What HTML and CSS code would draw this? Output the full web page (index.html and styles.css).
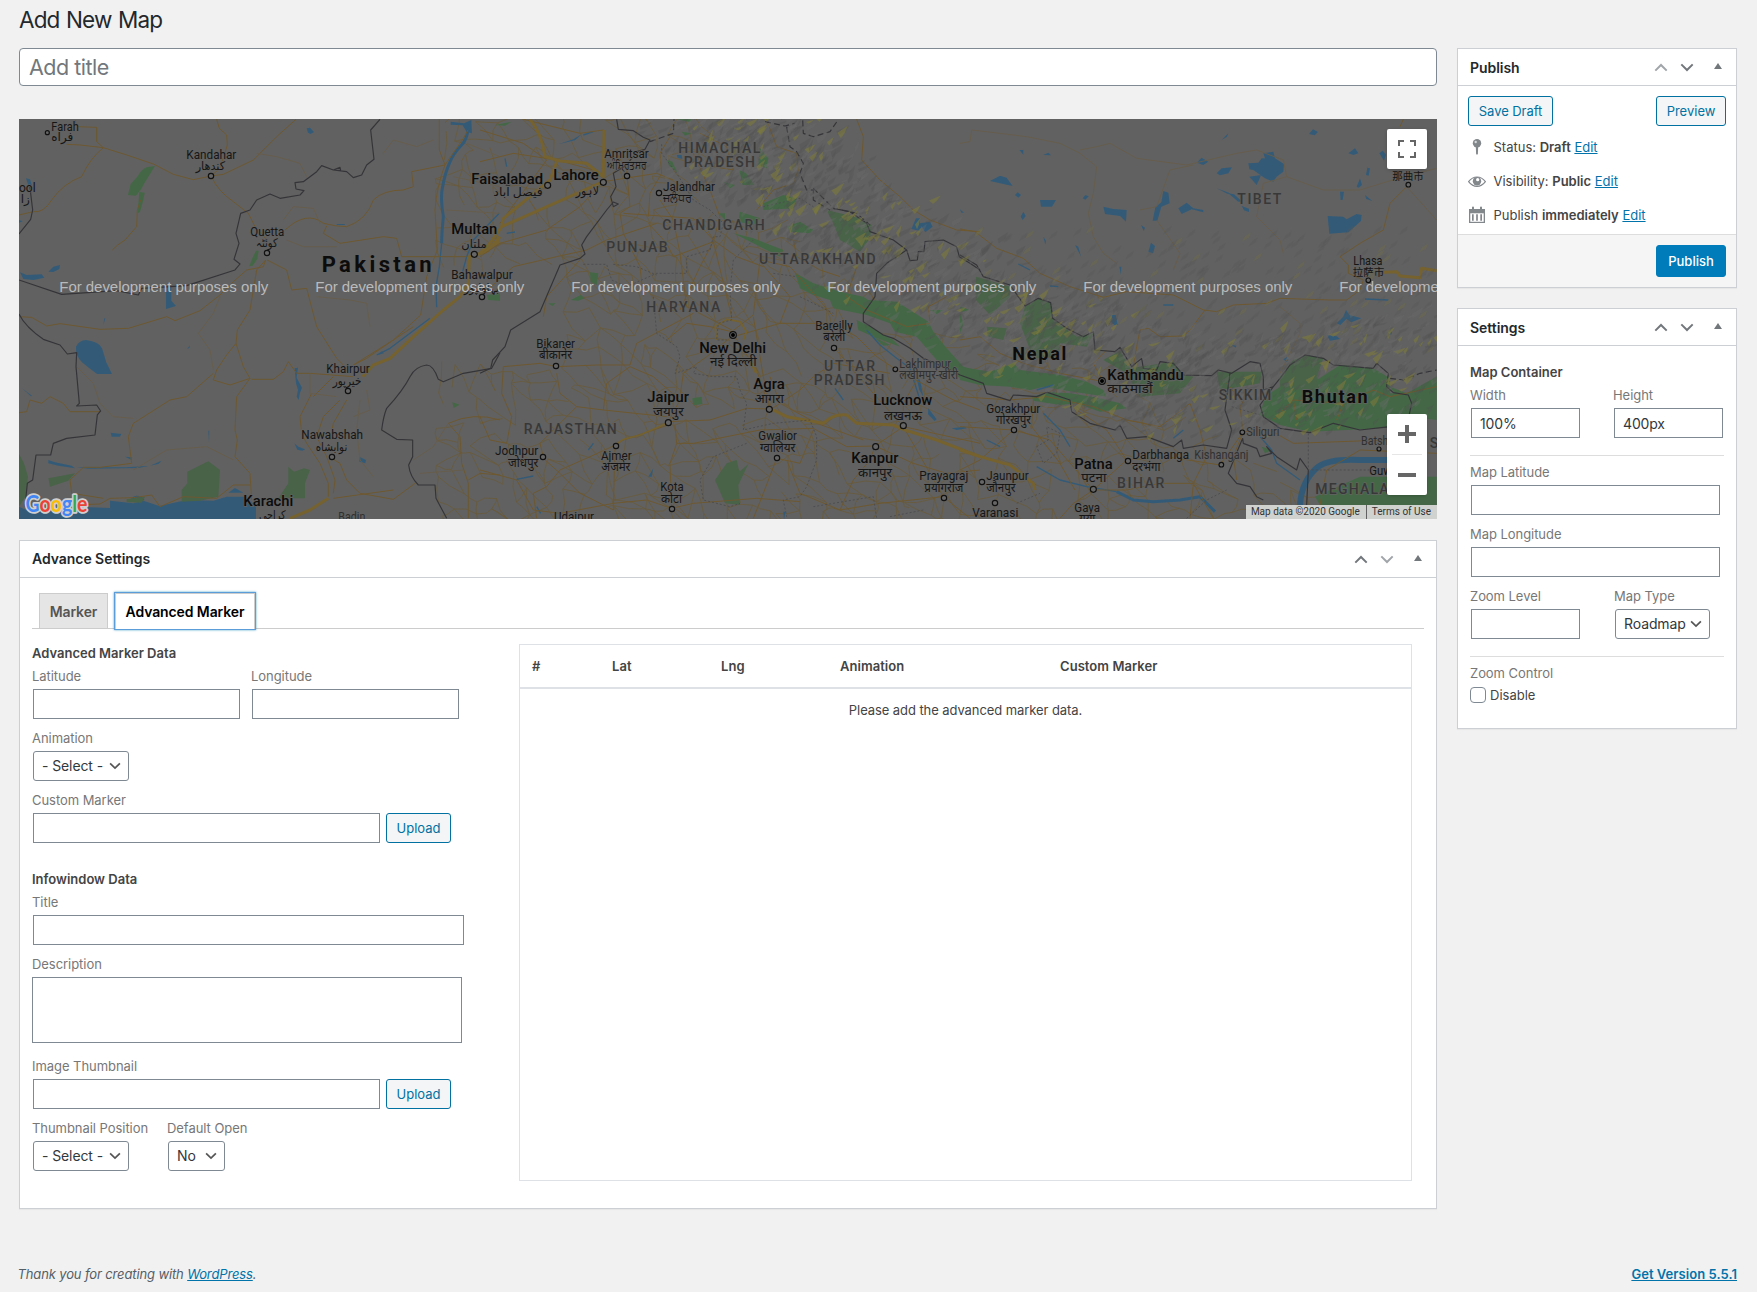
FILE: index.html
```html
<!DOCTYPE html>
<html lang="en">
<head>
<meta charset="utf-8">
<title>Add New Map</title>
<link rel="stylesheet" href="styles.css">
</head>
<body>
<svg class="defs" width="0" height="0">
  <symbol id="up" viewBox="0 0 14 9"><path d="M1.300 7.600 7 2l5.700 5.600" fill="none" stroke="currentColor" stroke-width="2"/></symbol>
  <symbol id="down" viewBox="0 0 14 9"><path d="M1.300 1.400 7 7l5.700-5.600" fill="none" stroke="currentColor" stroke-width="2"/></symbol>
  <symbol id="tri" viewBox="0 0 8 6"><path d="M4 0l4 6H0z" fill="currentColor"/></symbol>
</svg>
<h1 class="page-title">Add New Map</h1>
<div class="columns">
  <main class="main">
    <input class="title-input" type="text" placeholder="Add title">
    <div class="map">
      <svg class="map-canvas" width="1418" height="400" viewBox="0 0 1418 400">
        <g id="minor" class="minor"></g>
        <g transform="translate(-19 -9) scale(.33333)">
          <g class="water">
            <path d="M57 1190 90 1205 130 1190 230 1190 330 1194 330 1172 400 1180 430 1172 478 1188 560 1170 640 1172 680 1160 740 1160 768 1190 768 1230 57 1230z"/>
            <path d="M228 710q10-20 30-20 40 5 48 25 8 25 12 40l18 37h-45q-25-18-45-35-20-20-18-47z"/>
            <path d="M60 487 80 495 125 493 133 503 100 510 70 507zM145 485 160 470 180 465 178 477 160 486zM498 530 514 530 514 572 528 588 498 597zM78 205 90 208 98 235 90 240zM920 55l10-2 12 13-10 6-8-4zM57 330 68 334 57 338zM332 968 364 972 360 980 335 980zM145 1050l20 7 50 10 10 8-50-8-30-7zM230 1072l150 0 70-5 35-15-10 10-60 12-150 2zM375 1040l20 2 0 8zM883 1000l12 10 20 8-8 4-15-3zM1078 1040l20 10-2 10-18-5zM884 775l10-2-4 30 16 30-6 15-4 22-6-10 4-20-6-20zM660 1148l25 0 20-14 25 14-40 0zM390 1170q20-25 44 0l-20 4zM310 645l3-20 3 0zM1010 342l24 0 0 3-24 0zM66 835l30 22-3 2zM562 716l8-10-2 8zM1132 735l20-5-6-6zM625 962l3 0-1 35z"/>
            <path d="M1352 35l40 5 22-10 2 40-16-4-12-20-36-2z"/>
          </g>
          <path class="river" d="M1404 60Q1400 90 1385 105 1360 130 1348 160 1335 190 1328 230 1320 260 1330 320 1325 370 1325 400"/>
          <path class="brook" d="M1325 400 1318 470 1308 530 1310 592M1130 735 1170 715 1210 685 1250 655 1290 625"/>
          <path class="brook" d="M1498 310 1420 390 1400 440 1384 500"/>
          <path class="green" d="M465 168 440 172Q425 178 412 200L392 222 384 255 408 257 425 235 434 218zM418 246 434 248 430 270 420 305 413 310zM768 422l8 0-4 25-14 20-10 2 8-22zM1357 877l22 7-18 10zM1460 555l40-5 0 22-35-2z"/>
          <path class="park" d="M57 1032 72 1060 84 1100 76 1160 57 1190zM145 1105 225 1090 205 1112 150 1130zM562 1085 625 1054 660 1080 655 1160 600 1172 545 1175 545 1140 562 1120zM865 1070 882 1085 912 1075 930 1080 915 1120 915 1165 835 1165 865 1120zM380 1168l55-8-10 18-45-2z"/>
          <path class="road" d="M225 30 230 50 290 52 290 95 310 113 240 105 200 103M310 113 380 135 460 162 520 193 580 209 633 198 670 193 760 150 830 80 888 28M650 28 658 55 680 75 682 105 660 175 633 198M310 113Q270 145 245 200 190 220 155 270 130 310 100 305L57 315M633 198Q655 245 700 275L745 310 765 350 801 390M337 420Q350 405 375 390L410 350 412 300 422 270M57 620 95 622 140 648 180 641 300 658 385 655 500 620 525 632 600 602 660 555 700 515 740 480 790 470 797 450M57 908 80 905 90 870 125 880 150 860 190 880 210 905 300 905M85 1190 300 1182 330 1165 400 1163 455 1155 480 1190 550 1160 650 1165 700 1125 750 1125M797 450 770 480 750 600 712 660 708 700 680 735 650 780 640 810 690 825 750 805 730 770 708 700M640 790 560 860 510 870 400 940 385 980 395 1060 300 1072 250 1072 210 1110 215 1150 310 1165M750 805 710 860 705 960 712 990 705 1040 750 1090 755 1170M801 450 860 480 875 540 920 535 950 650 1010 745 1030 765M855 360Q920 300 970 340 1010 350 1040 350 1100 330 1120 270 1150 240 1210 240L1240 230 1235 185 1335 165 1318 120 1318 28M970 370 1020 400 1150 380 1190 385 1205 440 1400 440M980 348 970 370M1335 165Q1310 230 1305 300L1312 420 1280 500 1262 615 1180 690 1100 745 1060 765M755 808 820 808 850 785 865 755 890 790 930 790 1060 800M935 850 900 920 905 970 920 1000 960 1060 985 1120 985 1160M1020 870 970 920 950 980 980 1040 1005 1110 1000 1150M1040 870 1000 940 990 990M995 1045 1020 1060 1040 1110 1080 1150 1180 1168 1245 1120M1000 1165 1180 1140M1345 940Q1420 905 1500 930M1345 940 1380 980 1385 1060 1405 1120 1405 1225M1405 1110 1440 1090 1500 1095M970 830 940 860 1000 800M1335 165 1390 85 1404 60M1060 765 1180 690 1240 650"/>
          <path class="faint" d="M660 560 640 610 595 670 630 720 640 780M950 560 1050 570 1100 580 1110 650M850 330 880 290 940 295 960 340M860 390 910 410 1010 410M770 130 830 140 900 160 920 200M230 770 280 820 300 880 340 920 400 925M400 1080 500 1020 620 1010 700 1050M1080 870 1070 960 1080 1050 1120 1100M1150 130 1180 90 1250 110 1300 90M1400 100 1500 140M1360 200 1500 230M1340 300 1500 310M1440 400 1450 500M1100 840 1110 900 1060 920M1240 1050 1300 1010 1345 940M1260 1090 1390 1080M930 790 930 850 1010 860"/>
          <path class="highway" d="M1088 800 1120 765 1170 745 1240 680 1330 600 1380 560 1405 520 1408 440 1460 425 1500 380M1430 435 1500 395M870 1225 930 1200 985 1165"/>
          <path class="border" d="M57 510 185 553 350 542 415 555 425 535 560 527 705 480 720 462 702 448 717 400 708 370 722 310 750 300 770 270 810 252 840 265 900 255 912 242 888 237 885 218 910 215 950 185 965 167 1000 180 1022 182 1020 172 1000 180 1040 185 1060 203 1085 195 1100 165 1122 148 1112 60 1140 28M57 372 92 328 98 300 92 250 90 228M57 612Q75 650 130 688L180 705 202 732 230 728 228 770 238 880 230 888 290 885 302 903 292 915 285 975 200 985 160 1000 152 1035 108 1035 98 1110 82 1120 75 1190M1500 728 1475 775 1390 790 1330 815 1315 808Q1300 765 1280 765 1245 770 1230 800 1210 840 1160 895 1150 920 1145 960L1190 988 1238 990 1238 1040 1226 1065Q1230 1100 1255 1125L1305 1125 1308 1165 1340 1225"/>
        </g>
        <g transform="translate(461 -9) scale(.33333)">
          <path class="green" d="M45 45l50-10-20 12zM605 65l30 5-20 7zM590 28l45 0-5 8zM562 150l15 5 15 32-25-20zM840 115l25 30-5 30-25-10zM730 215l35 10-15 10zM778 180l20 10 25 35-35 0zM850 280 910 255 950 265 940 295 850 300zM780 305 840 325 820 345 775 335zM715 310l20 0 0 20zM760 370 820 385 910 420 900 440 820 400zM920 350 960 335 1000 360 990 370 930 365zM330 487l25 3-5 35-18-10zM272 570l30-15 12 10-20 7zM945 488 1000 520 1080 545 1150 560 1165 570 1250 575 1290 600 1345 635 1360 665 1400 715 1450 770 1500 785 1500 820 1440 805 1370 750 1310 680 1245 665 1230 640 1160 615 1060 595 1050 570 1000 555 960 535zM637 865l28-5 2 22-27 4zM205 580l22 0-10 8zM1130 630l30 15 80 45 20 20-80-30-45-20zM1180 680l50 25-20 2zM1350 600l40 0-20 12zM1440 590l30 10-25 5z"/>
          <path class="park" d="M1040 300 1140 325 1175 345 1170 385 1140 425 1080 390 1060 340zM740 1060 770 1050 778 1085 805 1062 775 1125 780 1185 735 1180 705 1110z"/>
          <path class="water" d="M1308 325l12 0 0 15 30-5 8 15-22 17-12-18-4 14-26-6zM590 135l15 0 2 12-14-4zM1440 298l12 10-8 0zM1310 805l10 5 10 50-12-20zM1345 895l25 33-6 5-20-20zM1415 955l40-5 5 5-30 5zM235 103l45-15 25-15-20 18zM505 1100l15-25-5 25zM910 1205l6 0-4 25z"/>
          <path class="brook" d="M1160 660 1200 705 1250 745 1290 775 1320 870M1065 835 1090 870M75 145l5 25M80 370l25-4M310 75l30-10M340 1000 325 1020M110 1108 160 1098M170 1190l12 20"/>
          <path class="road" d="M0 440 60 400 200 360 300 290 370 215 530 190 580 210M410 130 440 180 450 290 420 310 430 370 480 470 490 560M570 80 540 130 545 190 510 250 505 320M430 310 640 325 700 390 770 440 850 470M640 130 690 240 720 320 700 395 580 440 560 400 505 340M700 395 740 560 755 620M700 395 660 470 600 600M755 665 690 650 620 640 560 690M755 665 820 615 830 530 840 450 930 470 1000 550 1060 620M755 665 830 780 870 900M760 680 900 640 960 640 1060 640 1130 680 1190 740 1250 780 1420 870 1500 900M540 270 580 330 600 430 620 590 755 660M0 560 100 470 230 440 320 420 380 390 530 340M190 620 200 560 300 450M230 770 350 765 450 765 470 700 640 610M230 770 180 760 70 770 65 850 95 920 80 1000 30 990 0 920M230 790 240 850 290 890 370 900 560 920M290 890 180 1000 190 1040M370 900 380 820 450 770 520 800 600 870 565 935M565 935 690 930 800 895 870 897M565 945 430 990 400 1008 330 1040 240 1080 200 1130 160 1150M600 860 610 790 680 740 755 680M585 945 590 1000 570 1060 575 1195M590 1000 640 1000 840 960 1000 955 1100 1010 1185 1008 1270 950 1500 1000M890 1045 850 1150 820 1225M890 1045 960 1060 1000 960M1185 1010 1170 1050 1120 1110 1080 1200 960 1150 920 1050M870 900 960 840 1000 800 1060 760 1230 790M870 800 900 880 1010 940 1150 990M1270 950 1270 880 1310 810M1270 950 1390 1160 1470 1225M1190 1010 1300 1060 1400 1090 1500 1080M1390 1160 1200 1180 1080 1200M1270 950 1180 850 1060 710M0 60 130 100 200 150 60 340M0 155 100 130 230 150 340 180M130 28 300 70 370 60M860 30 890 110 950 130 955 180 940 220 880 240 830 300M1130 28 1150 80 1145 150 1200 210 1260 260 1300 300 1350 330 1430 360 1500 365M660 70 740 110 760 180 700 170M940 390 950 440 1020 480 1080 500M1130 470 1100 560 1160 600 1280 650 1350 640 1345 590 1400 560M0 1080 110 1110 160 1200 240 1210 400 1180 500 1170 575 1195 640 1180 830 1165 960 1175M190 1045 240 1090 300 1150 400 1200 405 1010M160 1150 170 1225M900 640 930 560 840 455M820 620 850 800 870 895"/>
          <path class="highway" d="M150 28Q185 70 195 140L240 153 320 160 370 200 372 60M230 155 210 210 70 325 65 350 370 215M65 350 30 400 0 430M870 895 920 920 1030 940Q1060 910 1100 915L1130 940 1240 945 1275 960 1370 990 1500 1040M830 790 815 760"/>
          <path class="thin-highway" d="M565 938 480 975 430 988 400 1008M710 690 705 650 740 628 780 635 800 665 790 690"/>
          <path class="border" d="M410 28 415 58 460 62 490 82 510 90 495 118 470 125 440 165 400 190 408 230 392 260 400 290 415 282 400 276 380 300 320 380 305 405 315 432 300 445 240 465 180 605 92 660 75 710 38 750 32 775 0 790"/>
          <path class="border dash" d="M855 35 915 48 945 40M1070 36 1050 65 1000 80 970 70 968 28M920 50 930 110 950 125 970 160 960 190 980 240 1000 240 1000 270 1050 300M510 95 580 70 582 28M1000 235 1060 295 1130 310 1170 345"/>
          <path class="border" d="M1060 295 1110 305 1160 340 1170 365 1240 390 1280 420 1290 452 1312 450 1315 425 1332 425 1335 395 1390 390 1430 410 1438 440 1470 460 1500 480M1280 420 1220 460 1190 490 1185 560 1150 610 1150 635 1210 675 1240 685 1290 715 1330 745 1400 775 1440 795 1480 815 1500 815"/>
          <path class="state" d="M310 463 380 463 395 510 440 530 530 490 620 490 620 440 690 420 700 380 720 380 730 340 690 300 640 270 590 190 545 130 545 100M820 390 760 450 750 540 755 630 715 640 710 690 740 690M400 463 470 470 530 495M520 560 530 670 590 710 600 740 585 790 650 770 640 790 700 800 770 800 780 840 800 880 790 960 880 940 990 930 1010 980 1010 1050 980 1130 960 1160 910 1170 920 1220M800 1000 700 1040 660 1110 670 1170 750 1190 780 1180M960 560 1060 610M850 290 960 265 1000 290M880 490 950 500M1000 1190 1180 1160 1190 1225M1230 1220 1330 1200"/>
        </g>
        <g transform="translate(941 -9) scale(.33333)">
          <path class="park" d="M48 500 150 530 150 560 90 615 48 570zM195 590 240 563 272 578 280 630 350 680 400 670 380 710 300 700 295 740 220 745 180 640zM80 650l60 5-10 35-45-10zM430 750 480 722 510 775 640 755 670 795 700 800 660 850 540 860 500 790zM770 785 815 785 905 785 900 820 780 840zM960 850 960 800 1000 750 1040 735 1090 745 1070 800 1090 850z"/>
          <path class="green" d="M0 770 90 785 160 760 180 780 300 795 380 815 430 840 440 860 340 845 250 830 210 840 150 830 60 825 0 810zM215 860 265 847 330 850 420 865 480 880 500 895 420 905 350 880 300 885 220 872zM915 860 960 830 1080 850 1070 810 1140 765 1240 775 1290 805 1290 850 1340 850 1345 950 1160 960 1050 965 960 945 900 915zM1290 830 1340 850 1430 800 1430 930 1350 920zM1065 1160 1200 1100 1430 1100 1430 1185 1080 1185zM905 1010l30 10-20 10zM0 610 10 640 0 670z"/>
          <path class="water" d="M90 213 120 197 140 203 158 228 120 220zM240 270l48 0-12 20-33 0zM182 320 190 305 197 318 188 330zM430 290 460 297 500 300 498 335 480 318 435 312zM610 243l15 5 4 32-25 10-12 42-14 0 8-40 18-15zM655 295 680 278 700 295 730 300 730 307 695 298 665 312zM710 158 725 143 745 155 730 165zM770 190 785 175 816 172 805 190 780 196zM865 160 895 158 905 145 915 145 910 130 940 125 945 145 972 162 970 185 950 200 940 215 915 205 880 180 868 178zM868 200l35-5-5 12-8 18zM845 288l22 8 0 10-15-5zM1103 318 1150 320 1160 328 1190 312 1205 315 1203 333 1165 367 1108 371zM1140 245l12 0-4 25-6 0zM1190 230l10-25 6 20-10 8zM1165 130 1185 115 1195 130 1180 135zM1218 195l4-22 8 2-4 22zM1258 130l10-8 10 12-6 18zM1047 72l12-14 15 8-10 10zM565 425l8-27 12 10-6 22zM345 405l10 5 8 30zM165 255l8-8 10 8-8 8zM368 265l8-10 10 4-10 10zM178 120l12 0 0 14zM250 135l15-7 8 8zM452 615l15 0 6 30-10 0-10-10 5-8zM1130 640l20-20 8-20 10 15 36 10-30 12-15-10-18 18zM1100 675l30 4 10 8-30 5zM970 748l10-6 6 6-6 8zM815 705l14 2-2 6zM785 90l20-20-4 10zM1290 655l6 15-4 5zM478 470l6 0-1 25zM1215 255l22 18-18-6zM770 235l40 15-5 3zM805 250l30 25 12 0-25-22zM250 380l8 12-2 12zM543 345l12 8-4 10z"/>
          <path class="bigriver" d="M1020 1185Q1025 1110 1075 1070 1110 1045 1200 1050L1290 1050"/>
          <path class="river" d="M470 1145 520 1170 580 1175 660 1170 720 1160 765 1205"/>
          <path class="brook" d="M230 1070 300 1110 380 1130 470 1145M900 980 935 1020 950 1060 1020 1110M250 910 300 960 330 1010M640 985 670 960M80 990 120 1010M230 840 280 825M1215 567 1285 570M175 462 210 480M270 528 295 530M610 585h30"/>
          <path class="road" d="M0 357 45 365 110 415 190 445 240 490 330 530 430 562 500 545 640 555 730 600 770 605 820 585 920 580 960 565 1110 570 1160 570 1200 540 1210 510M1140 440 1200 400 1270 360 1290 280 1340 230M1140 440 1165 465 1165 490 1210 510M415 565 410 545M735 600 690 660 670 678 600 680 565 655 540 660 530 710 520 770M0 690 60 680 120 730 190 760 300 790 430 815M430 815 400 760 440 720M0 860 150 870 260 860 400 890 500 930 600 950 690 880M0 950 160 960 270 990 400 1140M220 870 215 950 300 1060 345 1140M160 960 60 1050 0 1080M500 1050 400 1140 340 1180 300 1225M500 1050 440 960 350 900M500 1050 620 1040 780 1065 850 965 840 890 870 840M690 880 720 960 740 1040 700 1120 690 1225M850 965 930 960 1000 1000 1280 990M850 965 820 1040 830 1110M400 1140 500 1140 600 1120 700 1120 760 1225M940 930 1000 870 1150 880 1240 840 1290 860 1430 830M1000 870 1010 930M1150 880 1130 930M1330 28 1320 50M800 820 850 880M1080 1185 1100 1080 1200 1020 1430 1030"/>
          <path class="faint" d="M0 100 30 95 35 60 120 70 200 80 300 100 360 130 410 170 400 250 385 310 400 380 430 430 470 460M360 120 410 110 450 100 530 145 680 165 830 130 890 120 970 150 980 200 1090 240 1200 240 1330 200 1430 175M540 300 590 290 630 180 700 165M590 330 660 430 640 480M980 200 910 220 890 320 960 390 970 430M1430 330 1340 230M960 590 1020 640 1020 670 960 790"/>
          <path class="highway" d="M1270 487 1310 485 1320 498 1380 503 1385 475 1430 482M0 1020 60 1040 150 1065 220 1120 225 1140"/>
          <path class="border" d="M0 435 50 465 70 500 150 525 195 588 235 565 272 578 278 625 320 655 370 680 400 665 405 720 465 725 480 712 515 770 545 745 550 775 590 780 600 755 640 760 670 795 755 797 775 780 815 790 870 755 900 760 910 800 910 840 940 830 960 805 990 765 1035 735 1090 745 1120 765 1240 775 1250 760 1285 790 1280 830 1300 848 1345 855 1355 880 1340 950M0 795 70 820 80 850 150 872 160 855 230 860 262 847 330 870 335 905 390 940 465 960 480 945 500 985 560 980 640 1010 665 990 670 1015 730 1005 800 1015 815 960 795 900 810 790M940 830 900 885 910 920 960 955 1050 968 1120 940 1200 960 1290 950M848 985 850 1000 890 1015 900 1040 935 1030 920 1010 950 1040 1010 1080 1020 1045 1045 1080 1040 1185M848 985 825 1040 805 1090 830 1120 870 1130 890 1160 910 1170"/>
          <path class="border dash" d="M1290 805 1330 810 1380 790 1430 780"/>
          <path class="state" d="M230 1010 265 990 260 950 300 970 290 1030 250 1060 230 1010M680 1225 740 1170 800 1140M815 890 900 915M1045 970 1045 1080 1240 1080M170 1180 240 1150"/>
        </g>
        <g id="hills"></g>
        <g transform="translate(-19 -9) scale(.33333)">
          <g class="t s"><text x="154" y="62" textLength="82">Farah</text><text x="154" y="94">فراه</text><text x="559" y="147" textLength="150">Kandahar</text><text x="587" y="180" textLength="88">كندهار</text><text x="57" y="246">ool</text><text x="62" y="280">زا</text><text x="751" y="378" textLength="102">Quetta</text><text x="769" y="411" textLength="64">کوئٹہ</text><text x="1354" y="507" textLength="184">Bahawalpur</text><text x="1392" y="545" textLength="105">بہاولپور</text><text x="979" y="790" textLength="130">Khairpur</text><text x="998" y="826" textLength="86">خیرپور</text><text x="904" y="987" textLength="185">Nawabshah</text><text x="947" y="1022" textLength="95">نوابشاه</text><text x="1015" y="1232" textLength="81" class="dim">Badin</text></g>
          <g class="t b"><text x="1354" y="372" textLength="138">Multan</text><text x="730" y="1188" textLength="150">Karachi</text><text x="1414" y="222" textLength="215">Faisalabad</text></g>
          <g class="t s"><text x="1384" y="413" textLength="76">ملتان</text><text x="777" y="1227" textLength="80">کراچی</text><text x="1480" y="258" textLength="148">فیصل آباد</text></g>
          <text class="t c" x="965" y="487" textLength="330">Pakistan</text>
          <g class="dot"><circle cx="142" cy="68" r="6"/><circle cx="633" cy="198" r="8"/><circle cx="801" cy="429" r="8"/><circle cx="1423" cy="433" r="9"/><circle cx="1446" cy="561" r="8"/><circle cx="1044" cy="843" r="8"/><circle cx="996" cy="1041" r="8"/></g>
        </g>
        <g transform="translate(461 -9) scale(.33333)">
          <g class="t st"><text x="595" y="129" textLength="246">HIMACHAL</text><text x="611" y="171" textLength="214">PRADESH</text><text x="547" y="360" textLength="307">CHANDIGARH</text><text x="379" y="426" textLength="184">PUNJAB</text><text x="837" y="461" textLength="350">UTTARAKHAND</text><text x="499" y="606" textLength="222">HARYANA</text><text x="1032" y="783" textLength="153">UTTAR</text><text x="1001" y="825" textLength="212">PRADESH</text><text x="131" y="972" textLength="279">RAJASTHAN</text></g>
          <g class="t b"><text x="220" y="210" textLength="136">Lahore</text><text x="658" y="729" textLength="200">New Delhi</text><text x="820" y="838" textLength="94">Agra</text><text x="502" y="877" textLength="125">Jaipur</text><text x="1180" y="885" textLength="177">Lucknow</text><text x="1114" y="1060" textLength="141">Kanpur</text></g>
          <g class="t s"><text x="287" y="255" textLength="70">لاہور</text><text x="373" y="144" textLength="133">Amritsar</text><text x="382" y="178" textLength="117">ਅੰਮ੍ਰਿਤਸਰ</text><text x="549" y="243" textLength="156">Jalandhar</text><text x="549" y="275" textLength="87">ਜਲੰਧਰ</text><text x="169" y="714" textLength="116">Bikaner</text><text x="177" y="748" textLength="99">बीकानेर</text><text x="690" y="768" textLength="140">नई दिल्ली</text><text x="1006" y="660" textLength="112">Bareilly</text><text x="1030" y="692" textLength="66">बरेली</text><text x="824" y="879" textLength="88">आगरा</text><text x="519" y="918" textLength="92">जयपुर</text><text x="1212" y="930" textLength="114">लखनऊ</text><text x="1134" y="1100" textLength="102">कानपुर</text><text x="45" y="1036" textLength="130">Jodhpur</text><text x="84" y="1071" textLength="91">जोधपुर</text><text x="363" y="1050" textLength="92">Ajmer</text><text x="364" y="1084" textLength="87">अजमेर</text><text x="835" y="990" textLength="116">Gwalior</text><text x="840" y="1025" textLength="106">ग्वालियर</text><text x="541" y="1143" textLength="70">Kota</text><text x="543" y="1178" textLength="63">कोटा</text><text x="1318" y="1110" textLength="147">Prayagraj</text><text x="1333" y="1145" textLength="117">प्रयागराज</text><text x="222" y="1232" textLength="120">Udaipur</text><text class="dim" x="1258" y="774" textLength="155">Lakhimpur</text><text class="dim" x="1258" y="806" textLength="176">लखीमपुर-खीरी</text></g>
          <g class="dot"><circle cx="203" cy="226" r="9"/><circle cx="370" cy="217" r="9"/><circle cx="441" cy="198" r="8"/><circle cx="537" cy="249" r="8"/><circle cx="228" cy="768" r="8"/><circle cx="759" cy="675" r="10"/><circle cx="1062" cy="714" r="8"/><circle cx="1246" cy="778" r="7"/><circle cx="868" cy="898" r="9"/><circle cx="565" cy="938" r="9"/><circle cx="1270" cy="947" r="9"/><circle cx="1187" cy="1010" r="9"/><circle cx="189" cy="1041" r="8"/><circle cx="408" cy="1008" r="8"/><circle cx="891" cy="1044" r="8"/><circle cx="576" cy="1197" r="8"/><circle cx="1392" cy="1164" r="8"/></g>
          <circle cx="759" cy="675" r="6"/>
        </g>
        <g transform="translate(941 -9) scale(.33333)">
          <g class="t st"><text x="832" y="282" textLength="132">TIBET</text><text x="776" y="870" textLength="158">SIKKIM</text><text x="471" y="1134" textLength="142">BIHAR</text><text x="1066" y="1152" textLength="276">MEGHALAYA</text><text x="1409" y="1014">S</text></g>
          <g class="t c"><text x="157" y="751" textLength="162">Nepal</text><text x="1025" y="880" textLength="198">Bhutan</text></g>
          <g class="t b"><text x="442" y="810" textLength="229">Kathmandu</text><text x="343" y="1076" textLength="115">Patna</text></g>
          <g class="t s"><text x="442" y="850" textLength="136">काठमाडौं</text><text x="79" y="909" textLength="162">Gorakhpur</text><text x="108" y="943" textLength="105">गोरखपुर</text><text x="517" y="1047" textLength="170">Darbhanga</text><text x="517" y="1082" textLength="84">दरभंगा</text><text x="364" y="1116" textLength="75">पटना</text><text class="dim" x="703" y="1047" textLength="162">Kishanganj</text><text x="859" y="978" textLength="99" class="dim">Siliguri</text><text x="79" y="1110" textLength="127">Jaunpur</text><text x="79" y="1145" textLength="87">जौनपुर</text><text x="37" y="1221" textLength="138">Varanasi</text><text x="343" y="1206" textLength="77">Gaya</text><text x="358" y="1240" textLength="48">गया</text><text x="1180" y="465" textLength="87">Lhasa</text><text class="han" x="1178" y="498">拉萨市</text><text class="han" x="1297" y="210">那曲市</text><text class="dim" x="1203" y="1004" textLength="108">Batshal</text><text x="1228" y="1095" textLength="143">Guwahati</text></g>
          <g class="dot"><circle cx="426" cy="813" r="10"/><circle cx="162" cy="960" r="8"/><circle cx="504" cy="1053" r="8"/><circle cx="400" cy="1138" r="9"/><circle cx="784" cy="1064" r="7"/><circle cx="847" cy="967" r="7"/><circle cx="66" cy="1116" r="8"/><circle cx="105" cy="1179" r="8"/><circle cx="1225" cy="511" r="7"/><circle cx="1345" cy="224" r="7"/><circle cx="1257" cy="1017" r="6"/></g>
          <circle cx="426" cy="813" r="6"/>
        </g>
        <g class="dev"><text x="40.300" y="173" textLength="209">For development purposes only</text><text x="296.300" y="173" textLength="209">For development purposes only</text><text x="552.300" y="173" textLength="209">For development purposes only</text><text x="808.300" y="173" textLength="209">For development purposes only</text><text x="1064.300" y="173" textLength="209">For development purposes only</text><text x="1320.300" y="173" textLength="209">For development purposes only</text></g>
        <text class="logo" x="6.500" y="392.500" textLength="62" lengthAdjust="spacingAndGlyphs"><tspan class="g-blue">G</tspan><tspan class="g-red">o</tspan><tspan class="g-yellow">o</tspan><tspan class="g-blue">g</tspan><tspan class="g-green">l</tspan><tspan class="g-red">e</tspan></text>
      </svg>
      <div class="map-btn fullscreen"><svg width="18" height="18" viewBox="0 0 18 18"><path d="M1 6V1h5M12 1h5v5M17 12v5h-5M6 17H1v-5" fill="none" stroke="#666" stroke-width="2"/></svg></div>
      <div class="map-btn zoom"><svg width="40" height="81" viewBox="0 0 40 81"><path d="M11 20h18M20 11v18M11 61h18" stroke="#666" stroke-width="4"/><path d="M5 40.500h30" stroke="#e6e6e6"/></svg></div>
      <div class="attribution"><span>Map data ©2020 Google</span><span>Terms of Use</span></div>
    </div>
    <section class="box advance">
      <header class="box-head"><h2>Advance Settings</h2><div class="handles"><svg class="arrow"><use href="#up"/></svg><svg class="arrow off"><use href="#down"/></svg><svg class="tri"><use href="#tri"/></svg></div></header>
      <div class="advance-body">
        <nav class="tabs"><a class="tab">Marker</a><a class="tab active">Advanced Marker</a></nav>
        <div class="advance-grid">
          <form class="form">
            <h3>Advanced Marker Data</h3>
            <div class="row latlng">
              <div class="field"><label>Latitude</label><input type="text" class="input w207"></div>
              <div class="field"><label>Longitude</label><input type="text" class="input w207"></div>
            </div>
            <div class="field"><label>Animation</label><div class="select w96">- Select -<svg><use href="#down"/></svg></div></div>
            <div class="field"><label>Custom Marker</label><div class="row upload"><input type="text" class="input w347"><button type="button" class="button">Upload</button></div></div>
            <h3 class="second">Infowindow Data</h3>
            <div class="field"><label>Title</label><input type="text" class="input w431"></div>
            <div class="field desc"><label>Description</label><textarea class="area"></textarea></div>
            <div class="field"><label>Image Thumbnail</label><div class="row upload"><input type="text" class="input w347"><button type="button" class="button">Upload</button></div></div>
            <div class="row positions">
              <div class="field"><label>Thumbnail Position</label><div class="select w96">- Select -<svg><use href="#down"/></svg></div></div>
              <div class="field"><label>Default Open</label><div class="select w57">No<svg><use href="#down"/></svg></div></div>
            </div>
          </form>
          <div class="table">
            <div class="thead"><span>#</span><span>Lat</span><span>Lng</span><span>Animation</span><span>Custom Marker</span></div>
            <p class="empty">Please add the advanced marker data.</p>
          </div>
        </div>
      </div>
    </section>
  </main>
  <aside class="side">
    <section class="box publish">
      <header class="box-head"><h2>Publish</h2><div class="handles"><svg class="arrow off"><use href="#up"/></svg><svg class="arrow"><use href="#down"/></svg><svg class="tri"><use href="#tri"/></svg></div></header>
      <div class="publish-body">
        <div class="publish-actions"><button class="button save">Save Draft</button><button class="button preview">Preview</button></div>
        <div class="misc"><svg width="18" height="18" viewBox="0 0 18 18"><circle cx="9" cy="5.300" r="4.200" fill="#82878c"/><path d="M7.800 8.500h2.400l-.3 7.200-.9 1.300-.9-1.300z" fill="#82878c"/><circle cx="7.700" cy="4" r="1.200" fill="#d5d7d9"/></svg><span>Status: <b>Draft</b> <a>Edit</a></span></div>
        <div class="misc"><svg width="18" height="18" viewBox="0 0 18 18"><path d="M.6 9.600Q4.200 5 9 5t8.400 4.600Q13.800 14.300 9 14.300T.6 9.600z" fill="none" stroke="#82878c" stroke-width="1.200"/><circle cx="9" cy="9.300" r="4.200" fill="#82878c"/><circle cx="9.700" cy="7.700" r="1.600" fill="#fff"/></svg><span>Visibility: <b>Public</b> <a>Edit</a></span></div>
        <div class="misc"><svg width="18" height="18" viewBox="0 0 18 18"><path d="M1 3h3V1.500a1 1 0 0 1 2 0V3h6V1.500a1 1 0 0 1 2 0V3h3v14H1z" fill="#82878c"/><path d="M2.300 7.300h13.400v8.500H2.300z" fill="#fff"/><path d="M4 8.300h1.700v6.500H4zM8.150 8.300h1.700v6.500h-1.700zM12.300 8.300H14v6.500h-1.700z" fill="#82878c"/></svg><span>Publish <b>immediately</b> <a>Edit</a></span></div>
      </div>
      <footer class="publish-foot"><button class="button primary">Publish</button></footer>
    </section>
    <section class="box settings">
      <header class="box-head"><h2>Settings</h2><div class="handles"><svg class="arrow"><use href="#up"/></svg><svg class="arrow"><use href="#down"/></svg><svg class="tri"><use href="#tri"/></svg></div></header>
      <div class="settings-body">
        <h3>Map Container</h3>
        <div class="row two"><div class="field"><label>Width</label><input class="input w109" type="text" value="100%"></div><div class="field"><label>Height</label><input class="input w109" type="text" value="400px"></div></div>
        <hr>
        <div class="field"><label>Map Latitude</label><input class="input w249" type="text"></div>
        <div class="field"><label>Map Longitude</label><input class="input w249" type="text"></div>
        <div class="row two type"><div class="field"><label>Zoom Level</label><input class="input w109" type="text"></div><div class="field"><label>Map Type</label><div class="select w95">Roadmap<svg><use href="#down"/></svg></div></div></div>
        <hr>
        <div class="field"><label>Zoom Control</label><div class="check"><span class="checkbox"></span>Disable</div></div>
      </div>
    </section>
  </aside>
</div>
<footer class="page-foot"><em>Thank you for creating with <a>WordPress</a>.</em><a class="version">Get Version 5.5.1</a></footer>
<script src="map.js"></script>
</body>
</html>
```
FILE: styles.css
```css
* { box-sizing: border-box; }
body { margin: 0; height: 1292px; overflow: hidden; background: #f1f1f1; color: #444; font: 13px/20px Inter, "Liberation Sans", sans-serif; }
.defs { position: absolute; }
a { color: #0073aa; text-decoration: underline; }
b { font-weight: 600; }
h1, h2, h3, p { margin: 0; }
input, button, textarea { font-family: inherit; outline: none; }
.page-title { height: 48px; padding: 5px 0 0 19px; font-size: 22.500px; font-weight: 400; line-height: 30px; color: #23282d; letter-spacing: -.85px; word-spacing: 1px; }
.columns { display: flex; gap: 20px; padding-left: 19px; height: 1192px; align-items: flex-start; }
.main { width: 1418px; }
.side { width: 280px; display: flex; flex-direction: column; gap: 20px; }
.title-input { display: block; width: 100%; height: 38px; border: 1px solid #7e8993; border-radius: 4px; padding: 0 9px; background: #fff; font-size: 21.500px; letter-spacing: -.5px; }
.title-input::placeholder { color: #72777c; }

.map { position: relative; margin-top: 33px; height: 400px; background: #616161; overflow: hidden; }
.map-canvas { display: block; }
.map-canvas path { stroke-linejoin: round; }
.water { fill: #335b78; }
.green { fill: #446846; }
.park { fill: #496348; }
.road, .highway, .thin-highway, .border, .state, .river, .brook, .bigriver, .faint, .minor { fill: none; }
.road { stroke: #6d5830; stroke-width: 3; }
.faint { stroke: #665d4c; stroke-width: 3; }
.minor { stroke: #6a5a3a; stroke-width: .8; }
.highway { stroke: #75622f; stroke-width: 9; }
.thin-highway { stroke: #75622f; stroke-width: 5; }
.border { stroke: #353539; stroke-width: 3.500; }
.dash { stroke-dasharray: 18 10; }
.state { stroke: #4a4a4e; stroke-width: 2.500; stroke-dasharray: 6 6; }
.river { stroke: #335b78; stroke-width: 9; }
.bigriver { stroke: #335b78; stroke-width: 18; }
.brook { stroke: #335b78; stroke-width: 4; }
.t { font-family: Roboto, "Noto Sans", "Noto Sans CJK SC", "DejaVu Sans", sans-serif; fill: #161616; paint-order: stroke; stroke: #626262; stroke-width: 4px; }
.s { font-size: 36px; }
.b { font-size: 44px; font-weight: 500; fill: #0c0c0c; }
.c { font-size: 66px; font-weight: 700; fill: #0c0c0c; }
g.c { font-size: 54px; }
.st { font-size: 42px; font-weight: 500; fill: #383838; }
.dim { fill: #303030; }
.han { font-size: 31.500px; stroke: none; }
.dot { fill: #666; stroke: #111; stroke-width: 3.500; }
.dev { font: 15px "Liberation Sans", Arial, sans-serif; fill: #bababa; }
.logo { font: 700 22px Lato, sans-serif; paint-order: stroke; stroke: #cfcfcf; stroke-width: 3.500px; stroke-linejoin: round; }
.g-blue { fill: #4285f4; }
.g-red { fill: #ea4335; }
.g-yellow { fill: #fbbc05; }
.g-green { fill: #34a853; }
.map-btn { position: absolute; right: 10px; width: 40px; background: #fff; border-radius: 2px; box-shadow: 0 1px 4px -1px rgba(0,0,0,.3); display: flex; align-items: center; justify-content: center; }
.fullscreen { top: 10px; height: 40px; }
.zoom { top: 295px; height: 81px; }
.attribution { position: absolute; right: 0; bottom: 0; height: 14px; display: flex; gap: 1px; font: 10px/14px Roboto, sans-serif; color: #333; }
.attribution span { background: rgba(222,225,222,.88); padding: 0 6px 0 5px; white-space: nowrap; }

.box { background: #fff; border: 1px solid #ccd0d4; box-shadow: 0 1px 1px rgba(0,0,0,.04); }
.box-head { height: 37px; border-bottom: 1px solid #ccd0d4; display: flex; justify-content: space-between; align-items: center; padding: 2px 14px 0 12px; }
.box-head h2 { font-size: 14px; font-weight: 600; color: #23282d; line-height: 20px; letter-spacing: -.05px; }
.handles { display: flex; align-items: center; color: #72777c; margin-top: -2px; }
.arrow { width: 14px; height: 9px; margin-right: 12px; }
.arrow + .arrow { margin-right: 20px; }
.off { color: #a0a5aa; }
.tri { width: 8px; height: 6px; margin-top: -2px; }
h3 { font-size: 13px; line-height: 21px; height: 20px; font-weight: 600; color: #444; }
.row { display: flex; }
.field { margin-bottom: 6px; }
.field label { display: block; height: 26px; line-height: 27px; color: #777; letter-spacing: -.05px; white-space: nowrap; }
.input { display: block; height: 30px; margin: 0 1px; border: 1px solid #7e8993; background: #fff; padding: 0 8px; font-size: 14px; letter-spacing: -.15px; color: #32373c; }
.w207 { width: 207px; } .w347 { width: 347px; } .w431 { width: 431px; } .w109 { width: 109px; } .w249 { width: 249px; }
.w96 { width: 96px; } .w57 { width: 57px; } .w95 { width: 95px; }
.select { height: 30px; margin-left: 1px; border: 1px solid #7e8993; border-radius: 3px; display: flex; align-items: center; justify-content: space-between; padding: 0 7px 0 8px; font-size: 14px; letter-spacing: -.1px; color: #32373c; white-space: nowrap; }
.select svg { width: 12px; height: 8px; color: #555; flex: none; }
.area { display: block; width: 430px; height: 66px; border: 1px solid #7e8993; resize: none; }
.button { height: 30px; border: 1px solid #0071a1; border-radius: 3px; background: #f3f5f6; color: #0071a1; font-size: 13px; padding: 0; white-space: nowrap; }
.save { width: 85px; letter-spacing: -.05px; }
.preview { width: 70px; }
.primary { height: 32px; width: 70px; background: #007cba; border-color: #007cba; color: #fff; font-weight: 500; }

.advance { margin-top: 21px; height: 669px; }
.advance .box-head { padding-top: 0; }
.advance .handles { margin-top: 0; }
.advance-body { padding: 15px 12px 0; }
.tabs { display: flex; gap: 7px; height: 36px; border-bottom: 1px solid #ccc; padding-left: 7px; }
.tab { height: 35px; width: 69px; border: 1px solid #ccc; border-bottom: 0; background: #e5e5e5; color: #555; font-size: 14px; font-weight: 600; line-height: 35px; letter-spacing: -.1px; text-align: center; text-decoration: none; white-space: nowrap; }
.tab.active { width: 140px; height: 36px; background: #fff; color: #000; box-shadow: 0 0 0 1px #5b9dd9, 0 0 2px 1px rgba(30,140,190,.8); }
.advance-grid { display: grid; grid-template-columns: 487px 893px; padding-top: 14px; }
.latlng { gap: 10px; }
.upload { gap: 5px; }
.upload .button { width: 65px; }
.second { margin-top: 26px; }
.desc { margin-bottom: 10px; }
.positions { gap: 20px; }
.positions .field:first-child { width: 115px; }
.table { height: 537px; margin-top: 1px; border: 1px solid #dee2e6; }
.thead { height: 44px; border-bottom: 2px solid #dee2e6; display: grid; grid-template-columns: 80px 109px 119px 220px 1fr; padding-left: 12px; line-height: 43px; font-weight: 600; letter-spacing: .05px; }
.empty { margin-top: 11px; text-align: center; letter-spacing: -.08px; }

.publish { height: 240px; }
.publish-body { height: 148px; padding: 10px 10px 0; }
.publish-actions { display: flex; justify-content: space-between; margin-bottom: 4px; }
.misc { height: 34px; display: flex; align-items: center; gap: 7.500px; white-space: nowrap; }
.publish-foot { height: 53px; border-top: 1px solid #ddd; background: #f5f5f5; display: flex; justify-content: flex-end; padding: 10px 10px 0; }
.settings { height: 421px; }
.settings-body { padding: 16px 12px 0; }
.two { gap: 32px; }
.two.type { gap: 33px; }
.settings hr { height: 1px; border: 0; background: #ddd; margin: 11px 0 3px; }
.check { display: flex; align-items: center; gap: 4px; height: 18px; }
.checkbox { width: 16px; height: 16px; border: 1px solid #7e8993; border-radius: 4px; }
.page-foot { display: flex; justify-content: space-between; padding: 24px 20px 0 17.500px; color: #555d66; }
.page-foot em { letter-spacing: -.13px; }
.version { font-weight: 600; letter-spacing: .05px; }
```
FILE: map.js
```js
// Seeded generator so the relief and the minor roads are the same on every load.
let seed = 7;
const rnd = () => ((seed = (seed * 16807) % 2147483647) / 2147483647);
const NS = 'http://www.w3.org/2000/svg';
function add(parent, d, attrs) {
  const p = document.createElementNS(NS, 'path');
  p.setAttribute('d', d);
  for (const k in attrs) p.setAttribute(k, attrs[k]);
  parent.appendChild(p);
}

// City names scale their glyphs to the label width; region names only space out.
document.querySelectorAll('.s text, .b text').forEach(t => t.setAttribute('lengthAdjust', 'spacingAndGlyphs'));

// Relief facets along a ridge from the north-west to the east.
const ridge = [[660, 0], [740, 40], [810, 90], [890, 150], [980, 195], [1080, 245], [1180, 270], [1300, 260], [1410, 240]];
const hills = document.getElementById('hills');
for (let i = 0; i < 1900; i++) {
  const k = Math.floor(rnd() * (ridge.length - 1)), t = rnd();
  const spread = 105;
  const x = ridge[k][0] + (ridge[k + 1][0] - ridge[k][0]) * t + (rnd() - .5) * spread;
  const y = ridge[k][1] + (ridge[k + 1][1] - ridge[k][1]) * t + (rnd() - .5) * spread;
  const l = 4 + rnd() * 9, h = 2 + rnd() * 6;
  const yellow = rnd() < .13;
  const c = yellow ? '#7c7a3c' : rnd() < .6 ? '#505050' : '#6d6d6d';
  const w = yellow ? .35 : .6;
  add(hills, `M${x} ${y}l${l} ${-h}l${-l * .3} ${h}l${-l * w} ${h * .7}z`, { fill: c, opacity: yellow ? .6 : .32 });
}
for (let i = 0; i < 320; i++) {
  const x = 930 + rnd() * 480, y = 110 + rnd() * 130;
  add(hills, `M${x} ${y}l6 -4l-2 5l-7 4z`, { fill: rnd() < .2 ? '#77753f' : '#555', opacity: .3 });
}

// Minor roads: a jittered lattice joining neighbouring towns in the plains.
const minor = document.getElementById('minor');
const step = 18, pts = {};
const inPlain = (x, y) => x > 415 && x < 1290 && y > (x < 680 ? -20 : 40 + (x - 680) * .58 + (x > 1000 ? -20 : 30)) && (x > 540 || y < 130 || y > 240);
for (let i = 0; i < 80; i++) for (let j = 0; j < 25; j++) {
  pts[i + ',' + j] = [i * step + rnd() * 16, j * step - 10 + rnd() * 16];
}
let d = '';
for (let i = 0; i < 79; i++) for (let j = 0; j < 24; j++) {
  const a = pts[i + ',' + j];
  if (!inPlain(a[0], a[1])) continue;
  for (const [u, v] of [[1, 0], [0, 1], [1, 1]]) {
    if (rnd() < .45) continue;
    const b = pts[(i + u) + ',' + (j + v)];
    const mx = (a[0] + b[0]) / 2 + (rnd() - .5) * 5, my = (a[1] + b[1]) / 2 + (rnd() - .5) * 5;
    d += `M${a[0].toFixed(1)} ${a[1].toFixed(1)}L${mx.toFixed(1)} ${my.toFixed(1)}L${b[0].toFixed(1)} ${b[1].toFixed(1)}`;
  }
}
add(minor, d, {});
```
